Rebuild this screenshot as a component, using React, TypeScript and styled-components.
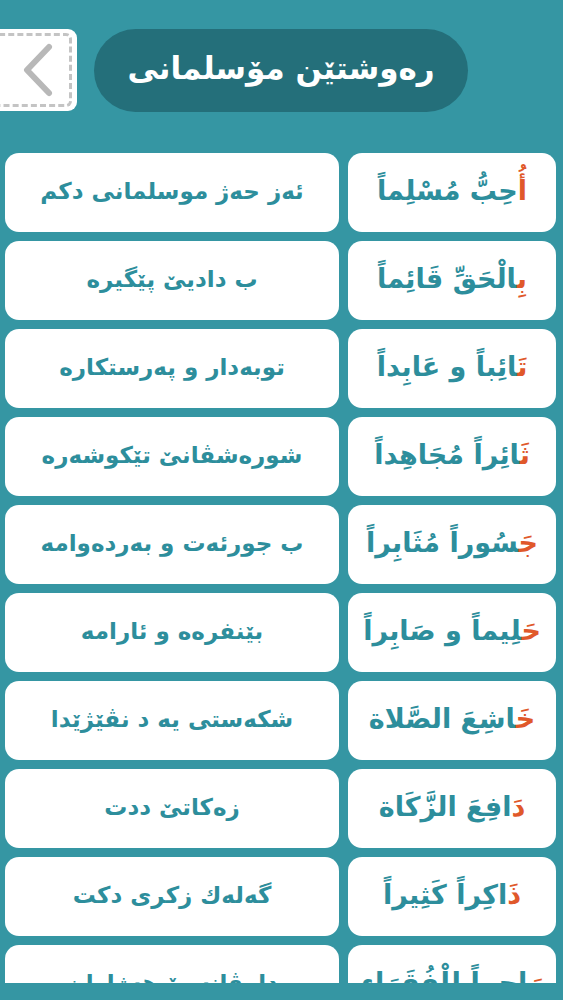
import styled, { createGlobalStyle } from "styled-components";

const GlobalStyle = createGlobalStyle`
  html, body {
    margin: 0;
    padding: 0;
    background: #3596a3;
  }
  * {
    box-sizing: border-box;
  }
`;

const Screen = styled.div`
  width: 563px;
  height: 1000px;
  overflow: hidden;
  background: #3596a3;
  font-family: "DejaVu Sans", "Noto Sans", sans-serif;
`;

const Header = styled.div`
  display: flex;
  align-items: center;
  padding-top: 29px;
  height: 111px;
`;

const BackButton = styled.div`
  width: 87px;
  height: 82px;
  margin-left: -10px;
  background: #fff;
  border-radius: 0 9px 9px 0;
  padding: 4px 5px 4px 0;
  display: flex;

  .dash {
    flex: 1;
    border: 3px dashed #c4c4c4;
    border-left: none;
    border-radius: 0 6px 6px 0;
    display: flex;
    align-items: center;
    justify-content: center;
    padding-left: 16px;
  }
`;

const TitlePill = styled.div`
  margin-left: 17px;
  width: 374px;
  height: 83px;
  border-radius: 42px;
  background: #246f7a;
  display: flex;
  align-items: center;
  justify-content: center;
  color: #fff;
  font-weight: bold;
  font-size: 31px;
  direction: rtl;
  padding-bottom: 4px;
`;

const List = styled.div`
  margin-top: 42px;
  height: 830px;
  overflow: hidden;
  display: flex;
  flex-direction: column;
  gap: 9px;
  padding: 0 7px 0 5px;
`;

const Row = styled.div`
  display: flex;
  flex-direction: row-reverse;
  gap: 9px;
  height: 79px;
  flex-shrink: 0;
`;

const Card = styled.div<{ $wide?: boolean }>`
  background: #fff;
  border-radius: 14px;
  width: ${(p) => (p.$wide ? "334px" : "208px")};
  display: flex;
  align-items: center;
  justify-content: center;
  direction: rtl;
  color: #2d8e9c;
  font-weight: bold;
  font-size: ${(p) => (p.$wide ? "23px" : "27px")};
  padding-bottom: 4px;
  white-space: nowrap;

  .first {
    color: #e0582a;
  }
`;

const rows: { ar: [string, string]; ku: string }[] = [
  { ar: ["أُ", "حِبُّ مُسْلِماً"], ku: "ئەز حەژ موسلمانی دکم" },
  { ar: ["بِ", "الْحَقِّ قَائِماً"], ku: "ب دادیێ پێگیره" },
  { ar: ["تَ", "ائِباً و عَابِداً"], ku: "توبەدار و پەرستکاره" },
  { ar: ["ثَ", "ائِراً مُجَاهِداً"], ku: "شورەشڤانێ تێکوشەره" },
  { ar: ["جَ", "سُوراً مُثَابِراً"], ku: "ب جورئەت و بەردەوامه" },
  { ar: ["حَ", "لِيماً و صَابِراً"], ku: "بێنفرەه و ئارامه" },
  { ar: ["خَ", "اشِعَ الصَّلاة"], ku: "شکەستی یە د نڤێژێدا" },
  { ar: ["دَ", "افِعَ الزَّكَاة"], ku: "زەکاتێ ددت" },
  { ar: ["ذَ", "اكِراً كَثِيراً"], ku: "گەلەك زكرى دكت" },
  { ar: ["رَ", "احِماً لِلْفُقَرَاءِ"], ku: "دلوڤانە بۆ هەژاران" },
];

export default function App() {
  return (
    <Screen>
      <GlobalStyle />
      <Header>
        <BackButton>
          <div className="dash">
            <svg width="34" height="56" viewBox="0 0 34 56">
              <path
                d="M28 5 L6 28 L28 51"
                fill="none"
                stroke="#b8b8b8"
                strokeWidth="6"
                strokeLinecap="round"
                strokeLinejoin="round"
              />
            </svg>
          </div>
        </BackButton>
        <TitlePill>رەوشتێن مۆسلمانی</TitlePill>
      </Header>
      <List>
        {rows.map((r, i) => (
          <Row key={i}>
            <Card>
              <span>
                <span className="first">{r.ar[0]}</span>
                {r.ar[1]}
              </span>
            </Card>
            <Card $wide>{r.ku}</Card>
          </Row>
        ))}
      </List>
    </Screen>
  );
}
